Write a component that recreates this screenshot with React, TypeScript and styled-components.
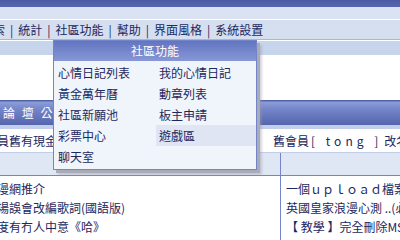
import React from "react";
import styled, { createGlobalStyle } from "styled-components";

const GlobalStyle = createGlobalStyle`
  html, body {
    margin: 0;
    padding: 0;
    background: #ffffff;
    overflow: hidden;
  }
  body {
    font-family: "Noto Sans CJK TC", "Liberation Sans", sans-serif;
    font-size: 12px;
    color: #1c2860;
  }
`;

const Page = styled.div`
  position: relative;
  width: 400px;
  height: 240px;
  overflow: hidden;
  background: #ffffff;
`;

const TopBar = styled.div`
  height: 7px;
  background: linear-gradient(#4b5aa2, #5868b0);
`;

const SubBand = styled.div`
  height: 12px;
  background: #dbe3f2;
  border-bottom: 1px solid #ffffff;
`;

const NavRow = styled.div`
  display: flex;
  align-items: center;
  height: 19px;
  background: #d5dff0;
  border-bottom: 1px solid #a9b6d6;
  white-space: nowrap;
  line-height: 19px;
`;

const NavList = styled.div`
  display: flex;
  margin-left: -19px;
`;

const NavItem = styled.span`
  color: #1c2860;
`;

const Sep = styled.span`
  color: #1c2860;
  padding: 0 5px;
`;

const NavShade = styled.div`
  height: 14px;
  border-top: 1px solid #ffffff;
  background: #c6d5ec;
`;

const Gap = styled.div`
  height: 45px;
  background: #ffffff;
`;

const NoticeBar = styled.div`
  display: flex;
  align-items: center;
  height: 25px;
  padding-left: 3px;
  background: linear-gradient(#45559e 0, #8b9bd8 10%, #7283c8 40%, #5565ac 100%);
  color: #ffffff;
  letter-spacing: 2px;
  white-space: nowrap;
`;

const Strip = styled.div`
  height: 4px;
  background: #c3cfea;
`;

const NoticeRow = styled.div`
  display: flex;
  align-items: center;
  height: 23px;
  white-space: nowrap;
`;

const NoticeLeft = styled.div`
  width: 273px;
  overflow: hidden;
`;

const NoticeText = styled.span`
  margin-left: -3px;
`;

const NoticeRight = styled.div`
  flex: 1;
  overflow: hidden;
`;

const Spaced = styled.span`
  letter-spacing: 4px;
  margin: 0 2px;
`;

const BandRow = styled.div`
  display: grid;
  grid-template-columns: 281px 1fr;
  height: 22px;
  border-top: 1px solid #c2cde8;
  border-bottom: 1px solid #7585ca;
  background: #dfe6f4;
`;

const BandCell = styled.div<{ divider?: boolean }>`
  border-right: ${(p) => (p.divider ? "1px solid #7585ca" : "none")};
`;

const ListArea = styled.div`
  display: grid;
  grid-template-columns: 281px 1fr;
`;

const ListCol = styled.div<{ divider?: boolean; indent: number }>`
  display: flex;
  flex-direction: column;
  padding-top: 3px;
  border-right: ${(p) => (p.divider ? "1px solid #7585ca" : "none")};
  overflow: hidden;
  white-space: nowrap;

  & > div {
    margin-left: ${(p) => p.indent}px;
  }
`;

const ListLine = styled.div`
  height: 19px;
  line-height: 19px;
  color: #1c2860;
`;

const Menu = styled.div`
  position: absolute;
  left: 53px;
  top: 40px;
  width: 202px;
  height: 128px;
  border: 1px solid #7385c8;
  background: #f0f4fb;
  box-shadow: 3px 3px 0 #a9abb6, 5px 5px 2px rgba(150, 152, 165, 0.4);
`;

const MenuHead = styled.div`
  height: 20px;
  line-height: 20px;
  text-align: center;
  color: #ffffff;
  background: linear-gradient(#6275c0, #8797d6);
`;

const MenuGrid = styled.div`
  display: grid;
  grid-template-columns: 102px 100px;
  grid-auto-rows: 21px;
  padding-top: 1px;
`;

const MenuItem = styled.div<{ active?: boolean; indent: number }>`
  display: flex;
  align-items: center;
  padding-left: ${(p) => p.indent}px;
  color: #1c2860;
  background: ${(p) => (p.active ? "#dfe5f3" : "transparent")};
  white-space: nowrap;
`;

const navLinks = ["搜索", "統計", "社區功能", "幫助", "界面風格", "系統設置"];

const menuItems: [string, string | null][] = [
  ["心情日記列表", "我的心情日記"],
  ["黃金萬年曆", "動章列表"],
  ["社區新願池", "板主申請"],
  ["彩票中心", "遊戲區"],
  ["聊天室", null],
];

const leftList = ["動漫網推介", "一場誤會改編歌詞(國語版)", "有度有冇人中意《哈》"];
const rightList = [
  "一個ｕｐｌｏａｄ檔案的問題",
  "英國皇家浪漫心測 ..(必看)",
  "【 教學 】完全刪除MSN",
  "【 成 員 】小心讀取",
];

const App = () => {
  return (
    <Page>
      <GlobalStyle />
      <TopBar />
      <SubBand />
      <NavRow>
        <NavList>
          {navLinks.map((l, i) => (
            <React.Fragment key={l}>
              {i > 0 && <Sep>|</Sep>}
              <NavItem>{l}</NavItem>
            </React.Fragment>
          ))}
        </NavList>
      </NavRow>
      <NavShade />
      <Gap />
      <NoticeBar>論 壇 公告</NoticeBar>
      <Strip />
      <NoticeRow>
        <NoticeLeft>
          <NoticeText>員舊有現金將會轉換</NoticeText>
        </NoticeLeft>
        <NoticeRight>
          舊會員<Spaced>[ tong ]</Spaced>改名為新會員
        </NoticeRight>
      </NoticeRow>
      <BandRow>
        <BandCell divider />
        <BandCell />
      </BandRow>
      <ListArea>
        <ListCol divider indent={-15}>
          {leftList.map((t) => (
            <ListLine key={t}>{t}</ListLine>
          ))}
        </ListCol>
        <ListCol indent={5}>
          {rightList.map((t) => (
            <ListLine key={t}>{t}</ListLine>
          ))}
        </ListCol>
      </ListArea>
      <Menu>
        <MenuHead>社區功能</MenuHead>
        <MenuGrid>
          {menuItems.map(([a, b]) => (
            <React.Fragment key={a}>
              <MenuItem indent={4}>{a}</MenuItem>
              {b ? (
                <MenuItem indent={3} active={b === "遊戲區"}>
                  {b}
                </MenuItem>
              ) : (
                <MenuItem indent={3} />
              )}
            </React.Fragment>
          ))}
        </MenuGrid>
      </Menu>
    </Page>
  );
};

export default App;
